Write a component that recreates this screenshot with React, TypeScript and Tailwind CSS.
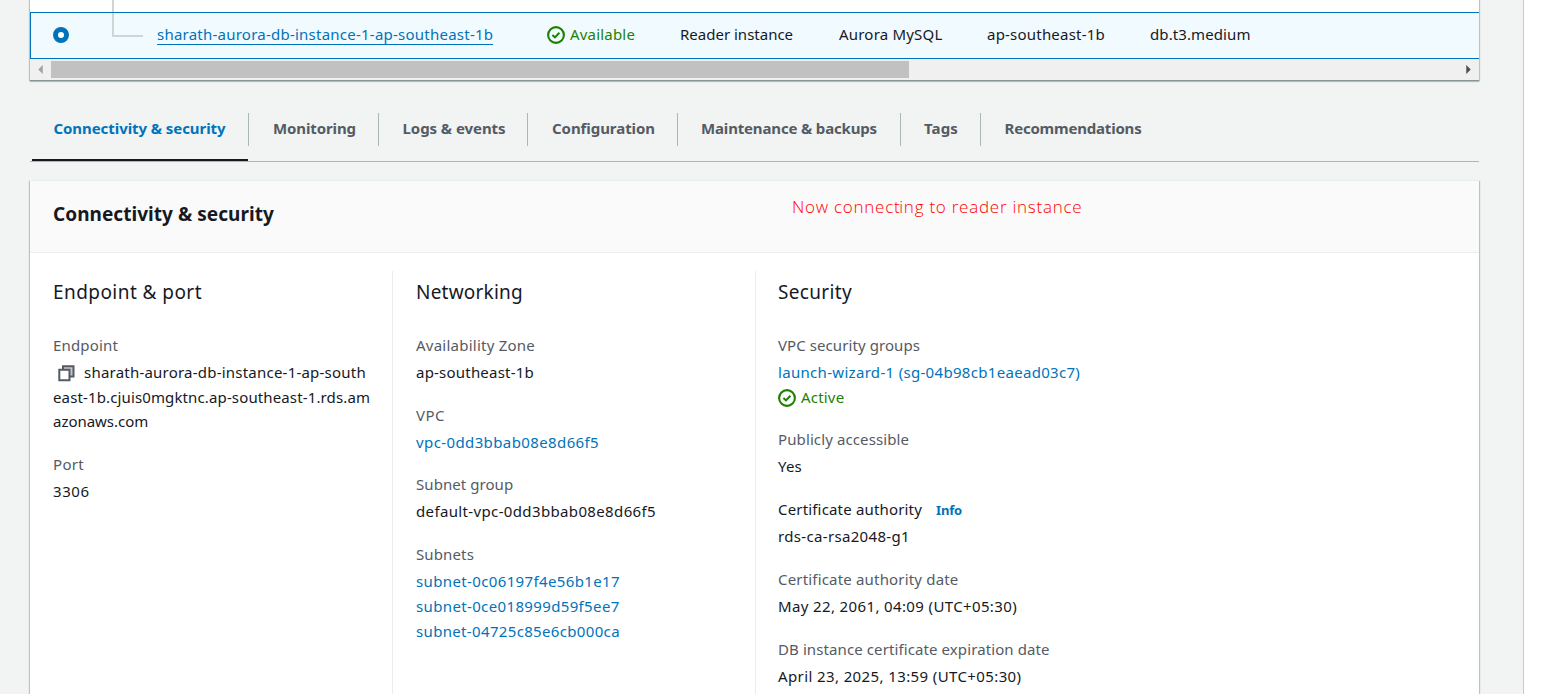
import type { ReactNode } from "react";

function StatusIcon({ className }: { className: string }) {
  return (
    <svg viewBox="0 0 18 18" className={className} fill="none" stroke="#1d8102">
      <circle cx="9" cy="9" r="7.9" strokeWidth="2.1" />
      <path d="M5.4 9l2.6 2.4 4.4-4.6" strokeWidth="2.1" />
    </svg>
  );
}

function CopyIcon() {
  return (
    <svg viewBox="0 0 17 17" className="ml-[5px] mr-[9px] inline-block h-[17px] w-[17px] align-[-4px]" stroke="#545b64" strokeWidth="2">
      <path d="M5 1.2h10.5v10.3H5z" fill="#c4c7cb" />
      <path d="M1.3 4.8h10.2v10.4H1.3z" fill="#fff" />
    </svg>
  );
}

function Field({ label, labelClass = "text-[#545b64]", className = "", children }: { label: ReactNode; labelClass?: string; className?: string; children: ReactNode }) {
  return (
    <div className={`pb-[18px] ${className}`}>
      <div className={`h-[27px] leading-[25px] ${labelClass}`}>{label}</div>
      {children}
    </div>
  );
}

function Line({ className = "", children }: { className?: string; children: ReactNode }) {
  return <div className={`h-[25px] whitespace-nowrap leading-[25px] ${className}`}>{children}</div>;
}

const tabs = [
  { label: "Monitoring", box: "w-[130px] pl-[24px] tracking-[-0.11px]" },
  { label: "Logs & events", box: "w-[149px] pl-[23.5px] tracking-[-0.06px]" },
  { label: "Configuration", box: "w-[150px] pl-[24px] tracking-[-0.06px]" },
  { label: "Maintenance & backups", box: "w-[223px] pl-[23px] tracking-[-0.16px]" },
  { label: "Tags", box: "w-[80px] pl-[23px] tracking-[0.14px]" },
];

export default function App() {
  return (
    <div className="flex h-[694px] w-[1543px] overflow-hidden bg-white font-['Noto_Sans',sans-serif] text-[15px] text-[#16191f]">
      <div className="flex h-full w-[1524px] shrink-0 flex-col border-r border-[#c6cbcc] bg-[#f2f3f3] pl-[30px]">
        <section className="flex h-[81px] w-[1449px] shrink-0 flex-col border-b border-[#879596] bg-white shadow-[0_1px_1px_0_rgba(0,28,36,0.2),1px_0_1px_0_rgba(0,28,36,0.2),-1px_0_1px_0_rgba(0,28,36,0.2)]">
          <div className="h-3 shrink-0 pl-[82px]">
            <div className="h-3 w-0.5 bg-[#cdd5d5]" />
          </div>
          <div className="flex h-[47px] shrink-0 items-start whitespace-nowrap border-y border-l border-[#0073bb] bg-[#f1faff] leading-[43px]">
            <div className="ml-[22px] mt-[14px] size-4 rounded-full border-5 border-[#0073bb] bg-white" />
            <div className="ml-[43px] h-6 w-[31px] border-b-2 border-l-2 border-[#cdd5d5]" />
            <div className="ml-[14px] w-[390px] text-[#0073bb]">
              <a className="inline-block h-8 border-b border-[#0073bb] tracking-[0.235px]">sharath-aurora-db-instance-1-ap-southeast-1b</a>
            </div>
            <div className="flex w-[133px] text-[#1d8102]">
              <StatusIcon className="mr-[5px] mt-[13px] size-[18px]" />
              <span className="tracking-[0.19px]">Available</span>
            </div>
            <div className="w-[159px]">Reader instance</div>
            <div className="w-[148px] tracking-[0.2px]">Aurora MySQL</div>
            <div className="w-[163px] tracking-[0.21px]">ap-southeast-1b</div>
            <div className="tracking-[0.1px]">db.t3.medium</div>
          </div>
          <div className="flex h-[21px] shrink-0 items-center justify-between bg-[#f0f0f0]">
            <svg viewBox="0 0 5 10" className="ml-2 h-[9px] w-[5px]" fill="#a3a3a3"><path d="M5 0v10L0 5z" /></svg>
            <div className="ml-2 mr-auto h-[17px] w-[858px] bg-[#c1c1c1]" />
            <svg viewBox="0 0 5 10" className="mr-2 h-[9px] w-[5px]" fill="#505050"><path d="M0 0v10l5-5z" /></svg>
          </div>
        </section>

        <nav className="mt-[32px] flex h-[49px] w-[1449px] shrink-0 border-b border-[#aab7b8] font-bold text-[#545b64]">
          <div className="ml-0.5 flex h-12 w-[216px] border-b-2 border-[#16191f] pl-[21.5px] leading-[31px] tracking-[-0.07px] text-[#0073bb]">Connectivity &amp; security</div>
          {tabs.map((tab) => (
            <div key={tab.label} className={`h-[33px] whitespace-nowrap border-l border-[#aab7b8] leading-[31px] ${tab.box}`}>{tab.label}</div>
          ))}
          <div className="h-[33px] border-l border-[#aab7b8] pl-[23.5px] leading-[31px] tracking-[-0.2px]">Recommendations</div>
        </nav>

        <section className="mt-[18px] flex h-[600px] w-[1449px] shrink-0 flex-col border-t border-[#eaeded] bg-white shadow-[1px_1px_1px_0_rgba(0,28,36,0.22),-1px_1px_1px_0_rgba(0,28,36,0.22)]">
          <header className="flex h-[72px] shrink-0 border-b border-[#eaeded] bg-[#fafafa] pl-[23px]">
            <h2 className="w-[739px] text-[19px] font-bold leading-[66px] tracking-[0.04px]">Connectivity &amp; security</h2>
            <p className="whitespace-nowrap font-['Open_Sans',sans-serif] text-[17px] font-light leading-[51px] tracking-[0.75px] text-[#ff0000]">
              Now connec<span className="tracking-[-0.4px]">t</span>ing to reader instance
            </p>
          </header>
          <div className="flex pt-[18px]">
            <div className="h-[500px] w-[362px] pl-[23px]">
              <h3 className="h-[62px] text-[19px] leading-[42px] tracking-[0.44px]">Endpoint &amp; port</h3>
              <Field label="Endpoint" labelClass="text-[#545b64] tracking-[0.16px]">
                <Line className="tracking-[0.22px]"><CopyIcon />sharath-aurora-db-instance-1-ap-south</Line>
                <Line className="tracking-[0.13px]">east-1b.cjuis0mgktnc.ap-southeast-1.rds.am</Line>
                <Line className="-mt-px tracking-[-0.03px]">azonaws.com</Line>
              </Field>
              <Field label="Port" labelClass="text-[#545b64] tracking-[0.31px]">
                <Line className="tracking-[0.6px]">3306</Line>
              </Field>
            </div>
            <div className="h-[500px] w-[363px] border-l border-[#eaeded] pl-[23px]">
              <h3 className="h-[62px] text-[19px] leading-[42px] tracking-[0.22px]">Networking</h3>
              <Field label="Availability Zone" labelClass="text-[#545b64] tracking-[0.24px]">
                <Line className="tracking-[0.21px]">ap-southeast-1b</Line>
              </Field>
              <Field label="VPC" labelClass="text-[#545b64] tracking-[0.48px]" className="-mb-px">
                <Line className="tracking-[0.39px] text-[#0073bb]">vpc-0dd3bbab08e8d66f5</Line>
              </Field>
              <Field label="Subnet group" labelClass="text-[#545b64] tracking-[0.06px]">
                <Line className="tracking-[0.36px]">default-vpc-0dd3bbab08e8d66f5</Line>
              </Field>
              <Field label="Subnets" labelClass="text-[#545b64] tracking-[0.13px]">
                <div className="text-[#0073bb]">
                  <Line className="tracking-[0.37px]">subnet-0c06197f4e56b1e17</Line>
                  <Line className="tracking-[0.36px]">subnet-0ce018999d59f5ee7</Line>
                  <Line className="tracking-[0.34px]">subnet-04725c85e6cb000ca</Line>
                </div>
              </Field>
            </div>
            <div className="h-[500px] border-l border-[#eaeded] pl-[22px]">
              <h3 className="h-[62px] text-[19px] leading-[42px] tracking-[0.34px]">Security</h3>
              <Field label="VPC security groups" labelClass="text-[#545b64] tracking-[0.08px]" className="-mb-px">
                <Line className="tracking-[0.31px] text-[#0073bb]">launch-wizard-1 (sg-04b98cb1eaead03c7)</Line>
                <Line className="flex text-[#1d8102]">
                  <StatusIcon className="mr-[5px] mt-1 size-[18px]" />
                  <span className="tracking-[0.2px]">Active</span>
                </Line>
              </Field>
              <Field label="Publicly accessible" labelClass="text-[#545b64] tracking-[0.11px]">
                <Line className="tracking-[0.2px]">Yes</Line>
              </Field>
              <Field
                label={<>Certificate authority<a className="ml-[14px] text-[13px] font-bold tracking-[-0.17px] text-[#0073bb]">Info</a></>}
                labelClass="tracking-[0.17px]"
              >
                <Line className="tracking-[0.33px]">rds-ca-rsa2048-g1</Line>
              </Field>
              <Field label="Certificate authority date" labelClass="text-[#545b64] tracking-[0.18px]">
                <Line className="tracking-[0.37px]">May 22, 2061, 04:09 (UTC+05:30)</Line>
              </Field>
              <Field label="DB instance certificate expiration date" labelClass="text-[#545b64] tracking-[0.1px]">
                <Line className="tracking-[0.39px]">April 23, 2025, 13:59 (UTC+05:30)</Line>
              </Field>
            </div>
          </div>
        </section>
      </div>
    </div>
  );
}
